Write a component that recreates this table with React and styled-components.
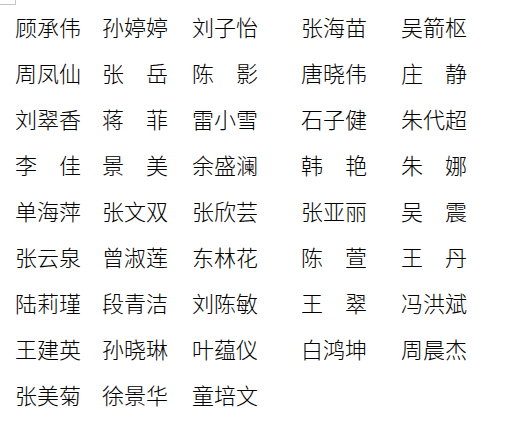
import React from "react";
import styled, { createGlobalStyle } from "styled-components";

const GlobalStyle = createGlobalStyle`
  html, body {
    margin: 0;
    padding: 0;
    background: #ffffff;
  }
  body {
    font-family: "Noto Sans CJK SC", "Noto Sans", sans-serif;
    color: #000000;
  }
`;

const Page = styled.div`
  width: 530px;
  height: 436px;
  position: relative;
  overflow: hidden;
`;

// page-margin corner marker, like a word processor draws
const CornerMark = styled.div`
  position: absolute;
  left: 0;
  top: 0;
  width: 15px;
  height: 4px;
  border-right: 1px solid #c6c6c6;
  border-bottom: 1px solid #c6c6c6;
`;

const NameGrid = styled.div`
  display: grid;
  grid-template-columns: 87px 90px 109px 100px 1fr;
  grid-auto-rows: 46px;
  padding: 3px 0 0 15px;
`;

const Name = styled.div`
  font-size: 22px;
  font-weight: 300;
  line-height: 46px;
  white-space: nowrap;
  letter-spacing: 0;
`;

const names = [
  ["顾承伟", "孙婷婷", "刘子怡", "张海苗", "吴箭枢"],
  ["周凤仙", "张　岳", "陈　影", "唐晓伟", "庄　静"],
  ["刘翠香", "蒋　菲", "雷小雪", "石子健", "朱代超"],
  ["李　佳", "景　美", "余盛澜", "韩　艳", "朱　娜"],
  ["单海萍", "张文双", "张欣芸", "张亚丽", "吴　震"],
  ["张云泉", "曾淑莲", "东林花", "陈　萱", "王　丹"],
  ["陆莉瑾", "段青洁", "刘陈敏", "王　翠", "冯洪斌"],
  ["王建英", "孙晓琳", "叶蕴仪", "白鸿坤", "周晨杰"],
  ["张美菊", "徐景华", "童培文", "", ""],
];

export default function App() {
  return (
    <Page>
      <GlobalStyle />
      <CornerMark />
      <NameGrid>
        {names.flat().map((n, i) => (
          <Name key={i}>{n}</Name>
        ))}
      </NameGrid>
    </Page>
  );
}
